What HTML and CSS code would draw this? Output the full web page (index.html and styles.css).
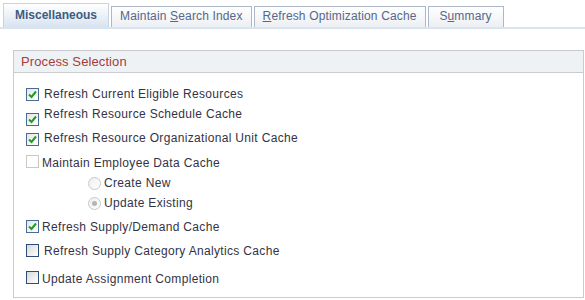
FILE: index.html
```html
<!DOCTYPE html>
<html lang="en">
<head>
<meta charset="UTF-8">
<title>Miscellaneous</title>
<link rel="stylesheet" href="styles.css">
</head>
<body>
<div class="tabs">
  <div class="tab active">Miscellaneous</div>
  <div class="tab">Maintain <u>S</u>earch Index</div>
  <div class="tab"><u>R</u>efresh Optimization Cache</div>
  <div class="tab short">S<u>u</u>mmary</div>
</div>

<div class="panel">
  <div class="panel-head">Process Selection</div>
  <div class="panel-body">
    <div class="row">
      <span class="box checked off1"><svg viewBox="0 0 11 11"><path d="M2 5.5 L4.5 8 L9 2.5" /></svg></span>
      <span class="label wide">Refresh Current Eligible Resources</span>
    </div>
    <div class="row gap6">
      <span class="box checked off6"><svg viewBox="0 0 11 11"><path d="M2 5.5 L4.5 8 L9 2.5" /></svg></span>
      <span class="label wide">Refresh Resource Schedule Cache</span>
    </div>
    <div class="row gap10">
      <span class="box checked off2"><svg viewBox="0 0 11 11"><path d="M2 5.5 L4.5 8 L9 2.5" /></svg></span>
      <span class="label wide">Refresh Resource Organizational Unit Cache</span>
    </div>
    <div class="row gap11">
      <span class="box disabled offm1"></span>
      <span class="label">Maintain Employee Data Cache</span>
    </div>
    <div class="row radio-row gap6">
      <span class="radio off1"></span>
      <span class="label">Create New</span>
    </div>
    <div class="row radio-row gap6">
      <span class="radio selected off1"></span>
      <span class="label">Update Existing</span>
    </div>
    <div class="row gap10">
      <span class="box checked"><svg viewBox="0 0 11 11"><path d="M2 5.5 L4.5 8 L9 2.5" /></svg></span>
      <span class="label">Refresh Supply/Demand Cache</span>
    </div>
    <div class="row gap10">
      <span class="box"></span>
      <span class="label wide">Refresh Supply Category Analytics Cache</span>
    </div>
    <div class="row gap14">
      <span class="box offm1"></span>
      <span class="label">Update Assignment Completion</span>
    </div>
  </div>
</div>
</body>
</html>
```

FILE: styles.css
```css
body {
  margin: 0;
  font-family: "Liberation Sans", Arial, sans-serif;
  font-size: 12px;
  color: #333346;
  background-color: #fff;
}
.tabs {
  display: flex;
  align-items: flex-end;
  gap: 2px;
  height: 24px;
  padding: 3px 0 0 3px;
  border-bottom: 2px solid #dae4f0;
}
.tab {
  box-sizing: border-box;
  height: 21px;
  line-height: 19px;
  padding: 0 8px;
  border: 1px solid #adb7c8;
  border-bottom: none;
  background: linear-gradient(#ffffff, #eceff3);
  color: #56678a;
  text-align: center;
  letter-spacing: 0.15px;
  white-space: nowrap;
}
.tab.short {
  min-width: 76px;
}
.tab.active {
  height: 24px;
  line-height: 22px;
  padding: 0 11px;
  border-color: #c6d3e3;
  background: linear-gradient(#ffffff, #d8e3f0);
  color: #3f5b82;
  font-weight: bold;
  letter-spacing: 0;
}
.panel {
  box-sizing: border-box;
  width: 571px;
  margin: 21px 0 0 13px;
  border: 1px solid #c9cbce;
}
.panel-head {
  height: 21px;
  line-height: 21px;
  padding-left: 7px;
  background-color: #eef2f4;
  border-bottom: 1px solid #c9cbce;
  color: #a63c3e;
  font-size: 13px;
  letter-spacing: 0.1px;
}
.panel-body {
  padding: 14px 0 11px 12px;
}
.row {
  display: flex;
  align-items: flex-start;
  height: 14px;
  line-height: 14px;
}
.gap6 { margin-top: 6px; }
.gap10 { margin-top: 10px; }
.gap11 { margin-top: 11px; }
.gap14 { margin-top: 14px; }
.radio-row {
  padding-left: 62px;
}
.box {
  box-sizing: border-box;
  flex: none;
  width: 13px;
  height: 13px;
  border: 1px solid #2c4d74;
  background: linear-gradient(135deg, #d9d9d9, #ffffff);
}
.box svg {
  display: block;
  width: 11px;
  height: 11px;
}
.box path {
  fill: none;
  stroke: #239a23;
  stroke-width: 2;
}
.box.checked {
  border-color: #4a6b93;
  background: linear-gradient(135deg, #e6e6e6, #ffffff);
}
.box.disabled {
  border-color: #ccc8c0;
  background: #fff;
}
.radio {
  box-sizing: border-box;
  flex: none;
  position: relative;
  width: 13px;
  height: 13px;
  border: 1px solid #c8c8c8;
  border-radius: 50%;
  background: linear-gradient(135deg, #eeeeee, #ffffff);
}
.radio.selected::after {
  content: "";
  position: absolute;
  left: 3px;
  top: 3px;
  width: 5px;
  height: 5px;
  border-radius: 50%;
  background-color: #b4b4b4;
}
.off1 { margin-top: 1px; }
.off2 { margin-top: 2px; }
.off6 { margin-top: 6px; }
.offm1 { margin-top: -1px; }
.label {
  margin-left: 3px;
  letter-spacing: 0.33px;
  white-space: nowrap;
}
.label.wide {
  margin-left: 5px;
}
```
